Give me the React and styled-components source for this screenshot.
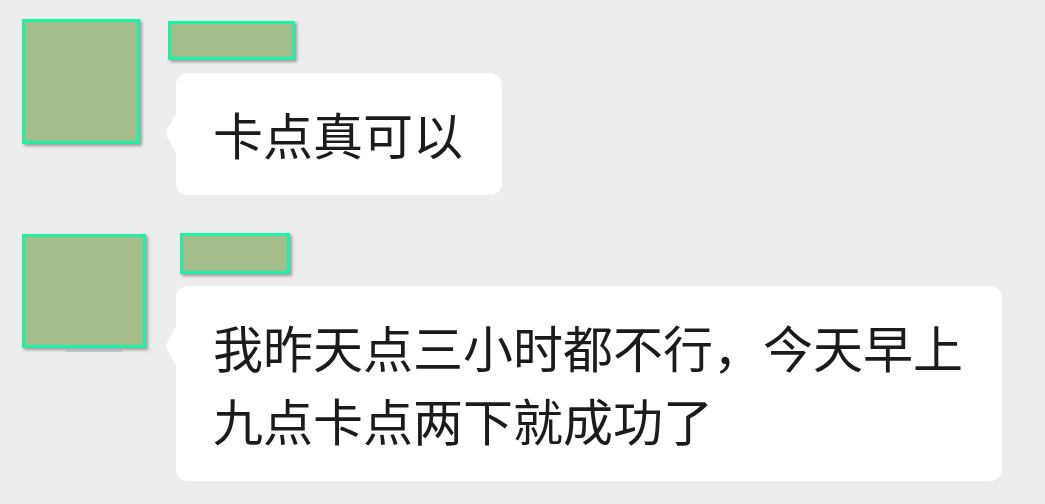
import React from "react";
import styled, { createGlobalStyle } from "styled-components";

const Global = createGlobalStyle`
  html, body { margin: 0; padding: 0; background: #ededed; }
  body { font-family: "Noto Sans CJK SC", "Noto Sans", sans-serif; }
`;

const Page = styled.div`
  width: 1045px;
  height: 504px;
  overflow: hidden;
  background: #ededed;
  padding: 19px 0 0 22px;
  box-sizing: border-box;
  display: flex;
  flex-direction: column;
  gap: 38px;
`;

const Row = styled.div`
  display: flex;
  align-items: flex-start;
`;

const AvatarSlot = styled.div`
  width: 154px;
  flex-shrink: 0;
  padding-top: ${(p) => p.$top}px;
`;

const Redact = styled.div`
  position: relative;
  box-sizing: border-box;
  width: ${(p) => p.$w}px;
  height: ${(p) => p.$h}px;
  background: #a5bd8b;
  border: 3px solid #1ef0a6;
  box-shadow: 2px 2px 3px rgba(0, 0, 0, 0.35);
`;

const Strip = styled.div`
  position: absolute;
  left: 41px;
  top: calc(100% + 3px);
  width: 56px;
  height: 4px;
  background: linear-gradient(#9eaab2, #c3cbd0);
`;

const Column = styled.div`
  display: flex;
  flex-direction: column;
  align-items: flex-start;
`;

const NameBox = styled(Redact)`
  margin-left: ${(p) => p.$x}px;
  margin-top: ${(p) => p.$top}px;
`;

const Bubble = styled.div`
  position: relative;
  margin-top: ${(p) => p.$top}px;
  background: #ffffff;
  border-radius: 12px;
  padding: 24px 39px 25px 37px;
  font-size: 50px;
  line-height: 73px;
  color: #1b1b1b;
  max-width: 750px;

  &::before {
    content: "";
    position: absolute;
    left: -14px;
    top: 46px;
    width: 28px;
    height: 28px;
    background: #ffffff;
    border-radius: 3px;
    transform: scaleX(0.55) rotate(45deg);
    transform-origin: center;
  }
`;

export default function App() {
  return (
    <>
      <Global />
      <Page>
        <Row>
          <AvatarSlot $top={0}>
            <Redact $w={118} $h={125} />
          </AvatarSlot>
          <Column>
            <NameBox $w={127} $h={39} $x={-8} $top={2} />
            <Bubble $top={13}>卡点真可以</Bubble>
          </Column>
        </Row>
        <Row>
          <AvatarSlot $top={1}>
            <Redact $w={124} $h={114}>
              <Strip />
            </Redact>
          </AvatarSlot>
          <Column>
            <NameBox $w={110} $h={41} $x={4} $top={0} />
            <Bubble $top={12}>
              我昨天点三小时都不行，今天早上九点卡点两下就成功了
            </Bubble>
          </Column>
        </Row>
      </Page>
    </>
  );
}
